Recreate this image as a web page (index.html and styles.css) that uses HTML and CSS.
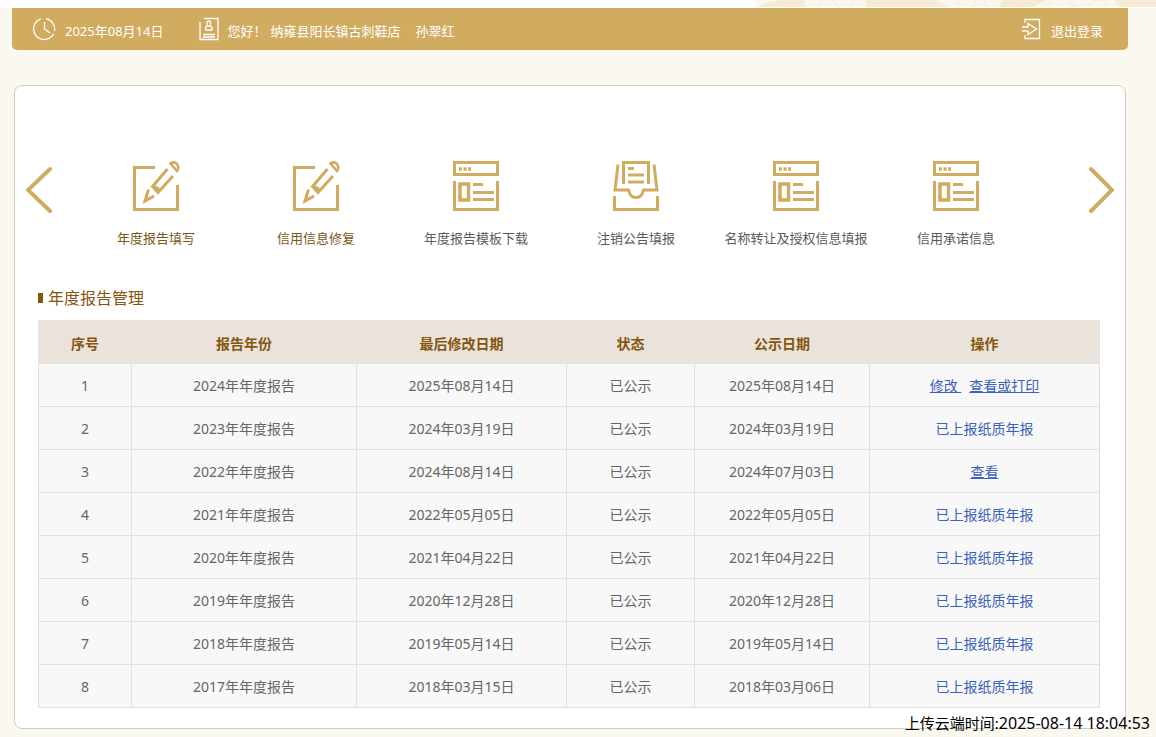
FILE: index.html
```html
<!DOCTYPE html>
<html lang="zh-CN">
<head>
  <meta charset="utf-8">
  <title>年度报告管理</title>
  <meta name="viewport" content="width=device-width, initial-scale=1.0">
  <link rel="stylesheet" href="styles.css">
</head>
<body>
  <svg class="symbols" aria-hidden="true">
    <symbol id="icon-edit" viewBox="0 0 52 52">
      <path d="M25 7.500H4.500V49.500H47.500V25" stroke-width="3"/>
      <path d="M37.500 9 22.500 26.500 28 32.500 43 16M23 26 29 29" stroke-width="3"/>
      <path d="M18.500 29.500 15 41 24 36" stroke-width="3"/>
      <path d="M40.500 3.500Q44 1 47 4 49.500 7.500 47 11Z" stroke-width="2.500"/>
    </symbol>
    <symbol id="icon-form" viewBox="0 0 52 52">
      <path d="M4.500 2.500H47.500V14.500H4.500ZM4.500 21V49.500H47.500V21" stroke-width="3"/>
      <path d="M10 24H18.500V40H10Z" stroke-width="3.500"/>
      <path d="M23 24.500H33M23 32.500H44M23 39.500H44" stroke-width="3"/>
      <path d="M9 9h3M13.500 9h3M18 9h3" stroke-width="3.500"/>
    </symbol>
    <symbol id="icon-inbox" viewBox="0 0 52 52">
      <path d="M13.500 24V2.500H38.500V24" stroke-width="3"/>
      <path d="M18 8.500H24M18 15H34M18 22H34" stroke-width="3"/>
      <path d="M8 4.500 5 30H18.500Q20 37.500 26 37.500T33.500 30H47L44 4.500" stroke-width="3"/>
      <path d="M4.500 36V49.500H47.500V36" stroke-width="3"/>
    </symbol>
  </svg>

  <div class="banner">
    <svg class="pattern" viewBox="0 0 400 8" preserveAspectRatio="xMaxYMin slice" aria-hidden="true">
      <path class="leaf" d="M0 8L12 2 26 0H48L50 8ZM110 0H180L194 8H110ZM246 0H290L276 8H242ZM358 0H400V8H364Z"/>
      <path d="M60 8l6-8M76 0l7 8M92 8l6-8M115 8l10-8M128 8l7-8M140 8l5-8M154 0l7 8M166 8l8-8M200 0l8 8M216 8l4-8M228 0l4 8M250 8l12-8M262 8l12-8M272 8l12-8M296 0l-8 8M312 2l10 6M330 8l9-8M346 0l6 8M370 8l9-8M386 8l9-8"/>
    </svg>
  </div>

  <header class="topbar">
    <svg class="icon-clock" width="24" height="24" viewBox="0 0 24 24" aria-hidden="true">
      <path d="M14 1.700A10.600 10.600 0 0 1 22.500 14M21.500 17A10.600 10.600 0 1 1 9 1.800M12.500 5V12L18 16"/>
    </svg>
    <span class="date">2025年08月14日</span>
    <svg class="icon-user" width="20" height="24" viewBox="0 0 20 24" aria-hidden="true">
      <path d="M5 1.500H19V22.500H1V5M4 17.500H16M4 20H16M6.500 13V10.500L8 9H11.500L13 10.500V13H6.500M8 9V6Q8 4 9.800 4T11.500 6V9"/>
    </svg>
    <span class="hello">您好！</span>
    <span class="company">纳雍县阳长镇古刺鞋店</span>
    <span>孙翠红</span>
    <a class="logout" href="#">
      <svg width="20" height="22" viewBox="0 0 20 22" aria-hidden="true">
        <path d="M4 5V1.500H18.500V20.500H4V17M1 9H7V5.500L15.500 11 7 16.500V13H1"/>
      </svg>
      <span>退出登录</span>
    </a>
  </header>

  <main class="card">
    <nav class="slider">
      <button class="arrow" type="button" aria-label="上一页">
        <svg width="26" height="48" viewBox="0 0 26 48"><path d="M24 3 2 24 24 45"/></svg>
      </button>
      <ul class="menu">
        <li><a class="active" href="#"><svg><use href="#icon-edit"/></svg>年度报告填写</a></li>
        <li><a class="active" href="#"><svg><use href="#icon-edit"/></svg>信用信息修复</a></li>
        <li><a href="#"><svg><use href="#icon-form"/></svg>年度报告模板下载</a></li>
        <li><a href="#"><svg><use href="#icon-inbox"/></svg>注销公告填报</a></li>
        <li><a href="#"><svg><use href="#icon-form"/></svg>名称转让及授权信息填报</a></li>
        <li><a href="#"><svg><use href="#icon-form"/></svg>信用承诺信息</a></li>
      </ul>
      <button class="arrow" type="button" aria-label="下一页">
        <svg width="26" height="48" viewBox="0 0 26 48"><path d="M3 3 24 24 3 45"/></svg>
      </button>
    </nav>

    <h2>年度报告管理</h2>
    <table>
      <colgroup>
        <col class="col-no"><col class="col-year"><col class="col-edit">
        <col class="col-state"><col class="col-public"><col class="col-action">
      </colgroup>
      <thead>
        <tr><th>序号</th><th>报告年份</th><th>最后修改日期</th><th>状态</th><th>公示日期</th><th>操作</th></tr>
      </thead>
      <tbody>
        <tr><td>1</td><td>2024年年度报告</td><td>2025年08月14日</td><td>已公示</td><td>2025年08月14日</td><td><a href="#">修改&nbsp;</a><a class="print" href="#">查看或打印</a></td></tr>
        <tr><td>2</td><td>2023年年度报告</td><td>2024年03月19日</td><td>已公示</td><td>2024年03月19日</td><td class="paper">已上报纸质年报</td></tr>
        <tr><td>3</td><td>2022年年度报告</td><td>2024年08月14日</td><td>已公示</td><td>2024年07月03日</td><td><a href="#">查看</a></td></tr>
        <tr><td>4</td><td>2021年年度报告</td><td>2022年05月05日</td><td>已公示</td><td>2022年05月05日</td><td class="paper">已上报纸质年报</td></tr>
        <tr><td>5</td><td>2020年年度报告</td><td>2021年04月22日</td><td>已公示</td><td>2021年04月22日</td><td class="paper">已上报纸质年报</td></tr>
        <tr><td>6</td><td>2019年年度报告</td><td>2020年12月28日</td><td>已公示</td><td>2020年12月28日</td><td class="paper">已上报纸质年报</td></tr>
        <tr><td>7</td><td>2018年年度报告</td><td>2019年05月14日</td><td>已公示</td><td>2019年05月14日</td><td class="paper">已上报纸质年报</td></tr>
        <tr><td>8</td><td>2017年年度报告</td><td>2018年03月15日</td><td>已公示</td><td>2018年03月06日</td><td class="paper">已上报纸质年报</td></tr>
      </tbody>
    </table>
  </main>

  <div class="stamp">上传云端时间:<time>2025-08-14 18:04:53</time></div>
</body>
</html>
```
FILE: styles.css
```css
* {
  box-sizing: border-box;
}
body {
  margin: 0;
  padding-bottom: 8px;
  background: #fbf8ef;
  color: #666;
  font: 14px/20px "Noto Sans", "Noto Sans CJK SC", sans-serif;
}
svg {
  fill: none;
  stroke: #d1ab60;
}
.symbols {
  position: absolute;
  width: 0;
  height: 0;
}
.banner {
  display: flex;
  justify-content: flex-end;
  height: 8px;
  background: #fff;
}
.pattern {
  width: 400px;
  height: 7px;
  background: #fcf7ec;
  stroke: #f3e8d2;
}
.leaf {
  fill: #f6ecd6;
  stroke: none;
}

.topbar {
  display: flex;
  align-items: center;
  height: 42px;
  margin: 0 28px 0 12px;
  padding: 0 25px 0 20px;
  border-radius: 0 0 5px 5px;
  background: #d1ab60;
  color: #fff;
  font-size: 13px;
}
.topbar svg {
  flex: none;
  stroke: #fff;
  stroke-width: 1.3;
}
.topbar span {
  padding-top: 4px;
}
.date {
  margin: 0 35px 0 9px;
}
.hello {
  margin-left: 9px;
}
.company {
  margin: 0 15px 0 4px;
}
.logout {
  display: flex;
  align-items: center;
  gap: 10px;
  margin-left: auto;
  color: #fff;
  text-decoration: none;
}

.card {
  margin: 35px 30px 0 14px;
  padding: 74px 25px 20px 23px;
  border: 1px solid #ccc;
  border-radius: 8px;
  background: #fff;
}
.slider {
  display: flex;
  align-items: flex-start;
  justify-content: space-between;
  margin: 0 -14px 0 -12px;
}
.arrow {
  margin-top: 6px;
  padding: 0;
  border: 0;
  background: none;
  cursor: pointer;
}
.arrow svg {
  display: block;
  stroke-width: 4;
  stroke-linecap: round;
}
.menu {
  display: flex;
  flex: 1;
  margin: 0 52px 0 24px;
  padding: 0;
  list-style: none;
}
.menu li {
  flex: 1;
}
.menu a {
  display: flex;
  flex-direction: column;
  align-items: center;
  gap: 16px;
  color: #5a5a5a;
  font-size: 13px;
  text-decoration: none;
  white-space: nowrap;
}
.menu .active {
  color: #7a5618;
}
.menu svg {
  width: 52px;
  height: 52px;
}

h2 {
  display: flex;
  align-items: center;
  gap: 5px;
  margin: 40px 0 12px;
  color: #85550f;
  font-size: 16px;
  font-weight: 400;
  line-height: 20px;
}
h2::before {
  content: "";
  width: 5px;
  height: 10px;
  background: #85550f;
}

table {
  width: 100%;
  table-layout: fixed;
  border-collapse: collapse;
  text-align: center;
}
th {
  height: 43px;
  padding: 4px 0 0;
  border: 1px solid #e9e3dc;
  background: #e9e3dc;
  color: #85550f;
}
td {
  height: 43px;
  padding: 2px 0 0;
  border: 1px solid #e1e1e1;
  background: #f8f8f8;
}
.col-no {
  width: 93px;
}
.col-year {
  width: 225px;
}
.col-edit {
  width: 210px;
}
.col-state {
  width: 128px;
}
.col-public {
  width: 175px;
}
td a,
.paper {
  color: #3a62ba;
}
.print {
  margin-left: 8px;
}

.stamp {
  position: absolute;
  right: 6px;
  bottom: 4px;
  color: #000;
  font-size: 15px;
}
.stamp time {
  font-size: 16px;
}
```
